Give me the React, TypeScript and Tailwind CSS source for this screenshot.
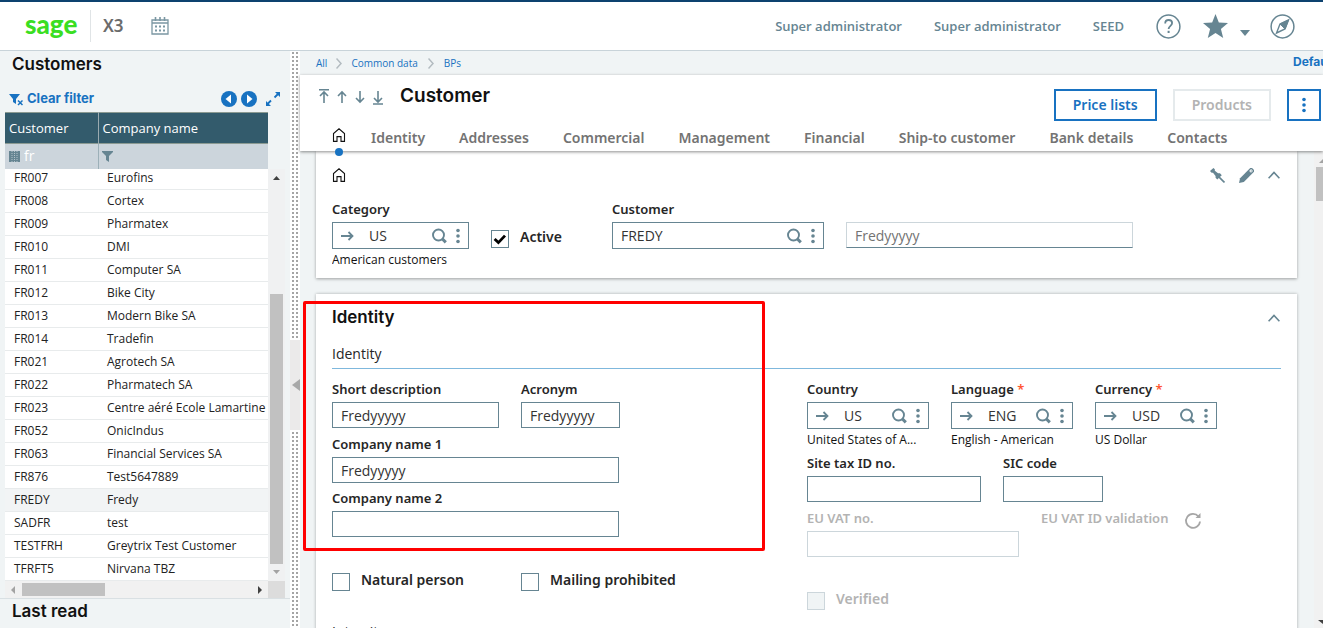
import React, { useId, useState } from 'react';

const customers = [
  ['FR007', 'Eurofins'],
  ['FR008', 'Cortex'],
  ['FR009', 'Pharmatex'],
  ['FR010', 'DMI'],
  ['FR011', 'Computer SA'],
  ['FR012', 'Bike City'],
  ['FR013', 'Modern Bike SA'],
  ['FR014', 'Tradefin'],
  ['FR021', 'Agrotech SA'],
  ['FR022', 'Pharmatech SA'],
  ['FR023', 'Centre aéré Ecole Lamartine'],
  ['FR052', 'OnicIndus'],
  ['FR063', 'Financial Services SA'],
  ['FR876', 'Test5647889'],
  ['FREDY', 'Fredy'],
  ['SADFR', 'test'],
  ['TESTFRH', 'Greytrix Test Customer'],
  ['TFRFT5', 'Nirvana TBZ'],
];

const tabs = ['Identity', 'Addresses', 'Commercial', 'Management', 'Financial', 'Ship-to customer', 'Bank details', 'Contacts'];

/* Icons */

function HomeIcon() {
  return (
    <svg width="14" height="14" viewBox="0 0 14 14" fill="none" stroke="#111" strokeWidth="1.1">
      <path d="M1.5 13.4V5.6L7 .8l5.5 4.8v7.8H9V8.6H5v4.8z" />
    </svg>
  );
}

function SearchIcon() {
  return (
    <svg width="16" height="16" viewBox="0 0 16 16" fill="none" stroke="#668592">
      <circle cx="6.500" cy="7" r="5.500" strokeWidth="1.900" />
      <path d="M10.200 10.800l3.600 3.600" strokeWidth="3" />
    </svg>
  );
}

function DotsIcon({ color = '#668592' }: { color?: string }) {
  return (
    <svg width="4" height="16" viewBox="0 0 4 16" fill={color}>
      <circle cx="2" cy="2.5" r="1.8" />
      <circle cx="2" cy="8" r="1.8" />
      <circle cx="2" cy="13.5" r="1.8" />
    </svg>
  );
}

function ArrowRightIcon() {
  return (
    <svg width="13" height="10" viewBox="0 0 13 10" fill="none" stroke="#668592" strokeWidth="1.8">
      <path d="M0 5h11.500M7.500 1l4 4-4 4" />
    </svg>
  );
}

function ChevronUpIcon() {
  return (
    <svg width="12" height="8" viewBox="0 0 12 8" fill="none" stroke="#668592" strokeWidth="1.6">
      <path d="M.6 7.2L6 1.5l5.4 5.7" />
    </svg>
  );
}

function RecordArrow({ kind }: { kind: 'first' | 'previous' | 'next' | 'last' }) {
  const paths = {
    first: 'M0 1.700h10M5 15V4M1 8l4-4 4 4',
    previous: 'M5 15V4M1 8l4-4 4 4',
    next: 'M5 3v11M1 10l4 4 4-4',
    last: 'M0 16h10M5 3v11M1 10l4 4 4-4',
  };
  return (
    <button aria-label={kind} className="cursor-pointer">
      <svg width="10" height="17" viewBox="0 0 10 17" fill="none" stroke="#668592" strokeWidth="1.6">
        <path d={paths[kind]} />
      </svg>
    </button>
  );
}

/* Form parts */

function Field({ label, value = '', className = '', disabled = false }: { label: string; value?: string; className?: string; disabled?: boolean }) {
  const id = useId();
  return (
    <div className={className}>
      <label htmlFor={id} className={`block font-['Noto_Sans'] text-[13px] leading-5 font-semibold ${disabled ? 'text-[#b3b3b3]' : 'text-[#262626]'}`}>
        {label}
      </label>
      <input
        id={id}
        defaultValue={value}
        disabled={disabled}
        className={`mt-[3px] block h-[26px] w-full border bg-white px-2 text-sm text-[#333] ${disabled ? 'border-[#ccd6db]' : 'border-[#668592]'}`}
      />
    </div>
  );
}

type LookupProps = { label: string; value: string; note?: string; required?: boolean; link?: boolean; className?: string };

function Lookup({ label, value, note, required, link = true, className = '' }: LookupProps) {
  const id = useId();
  return (
    <div className={className}>
      <label htmlFor={id} className="block font-['Noto_Sans'] text-[13px] leading-5 font-semibold text-[#262626]">
        {label}
        {required && <span className="text-[#ff5630]"> *</span>}
      </label>
      <div className="mt-[3px] flex h-[27px] items-center border border-[#668592] bg-white pr-2 pl-2">
        {link && (
          <button aria-label={`Open ${label}`} className="mr-[15px] shrink-0">
            <ArrowRightIcon />
          </button>
        )}
        <input id={id} defaultValue={value} className="min-w-0 flex-1 text-sm text-[#333]" />
        <button aria-label={`Search ${label}`} className="mr-2 shrink-0">
          <SearchIcon />
        </button>
        <button aria-label={`${label} actions`} className="shrink-0">
          <DotsIcon />
        </button>
      </div>
      {note && <p className="mt-[3px] truncate text-xs leading-4 text-[#111]">{note}</p>}
    </div>
  );
}

function Checkbox({ label, checked = false, disabled = false, className = '' }: { label: string; checked?: boolean; disabled?: boolean; className?: string }) {
  const [on, setOn] = useState(checked);
  return (
    <label className={`flex items-start gap-[11px] font-['Noto_Sans'] text-sm font-semibold ${disabled ? 'text-[#b3b3b3]' : 'text-[#262626]'} ${className}`}>
      <span className="relative mt-[3px] block size-[18px]">
        <input
          type="checkbox"
          checked={on}
          disabled={disabled}
          onChange={() => setOn(!on)}
          className={`block size-[18px] appearance-none border ${disabled ? 'border-[#ccd6db] bg-[#f0f4f5]' : 'border-[#668592] bg-white'}`}
        />
        {on && (
          <svg className="pointer-events-none absolute inset-0" width="18" height="18" viewBox="0 0 18 18" fill="none" stroke="#000" strokeWidth="2.8">
            <path d="M3.6 9l3.8 3.6L14 5.6" />
          </svg>
        )}
      </span>
      {label}
    </label>
  );
}

/* Page parts */

function TopBar() {
  return (
    <header className="flex h-[51px] shrink-0 items-center border-t-2 border-b border-t-[#0d426f] border-b-[#c8d3d9] bg-white pr-7 pl-[25px] text-[#668592]">
      <div className="flex h-8 w-[66px] items-center border-r border-[#e0e4e6] pb-1 font-['Lato'] text-[26px] font-black text-[#3ade22]">sage</div>
      <div className="ml-3 font-['Noto_Sans'] text-[17px] font-semibold text-[#6b6b6b]">X3</div>
      <button aria-label="Calendar" className="ml-[27px]">
        <svg width="18" height="18" viewBox="0 0 18 18" fill="none" stroke="#7b97a3">
          <path d="M1 3h16v14H1zM1 6h16" strokeWidth="1.3" />
          <path d="M4.500 0v4M9 0v4M13.500 0v4" strokeWidth="1.6" />
          <path d="M4 9.500h2M8 9.500h2M12 9.500h2M4 13.500h2M8 13.500h2M12 13.500h2" strokeWidth="2" />
        </svg>
      </button>
      <nav className="ml-auto flex items-center text-[13px] leading-6 font-semibold">
        <a href="#user">Super administrator</a>
        <a href="#role" className="ml-8">Super administrator</a>
        <a href="#endpoint" className="ml-8">SEED</a>
        <button aria-label="Help" className="ml-8">
          <svg width="25" height="25" viewBox="0 0 25 25" fill="none" stroke="#668592">
            <circle cx="12.500" cy="12.500" r="11.400" strokeWidth="1.5" />
            <path d="M9.200 9.500c0-4.800 6.900-4.400 6.900-.4 0 2.800-3.500 2.700-3.500 6" strokeWidth="1.8" />
            <path d="M12.600 16.800v2.200" strokeWidth="2" />
          </svg>
        </button>
        <button aria-label="Favorites" className="ml-[22px] flex items-end">
          <svg width="25" height="25" viewBox="0 0 24 24" fill="#668592">
            <path d="M12 0l3.200 8.200 8.800.5-6.800 5.600 2.200 8.700-7.400-4.800L4.600 23l2.200-8.700L0 8.700l8.800-.5z" />
          </svg>
          <svg width="10" height="9" viewBox="0 0 10 9" fill="#668592" className="ml-3">
            <path d="M0 0h10L5 6z" />
          </svg>
        </button>
        <button aria-label="Navigation" className="ml-5">
          <svg width="25" height="25" viewBox="0 0 25 25" fill="none" stroke="#668592">
            <circle cx="12.500" cy="12.500" r="11.400" strokeWidth="1.500" />
            <path d="M18.500 6l-3.500 9-8.500 4 3.500-9z" strokeWidth="1.400" />
            <path d="M18.500 6l-8.500 4 3 3z" fill="#668592" />
            <path d="M18.500 6L15 15l-2.500-2.500z" fill="#668592" />
          </svg>
        </button>
      </nav>
    </header>
  );
}

function Sidebar() {
  return (
    <aside className="flex w-[290px] shrink-0 flex-col bg-[#f0f4f5]">
      <h2 className="pt-px pl-3 font-['Inter'] text-[17px] leading-6 font-semibold text-[#111]">Customers</h2>
      <div className="mt-[13px] flex h-5 items-center pr-[9px] pl-[9px] text-[#1872c1]">
        <button className="flex items-center gap-1 font-['Inter'] text-[13px] font-bold">
          <svg width="14" height="14" viewBox="0 0 14 14" fill="none" stroke="#1872c1">
            <path d="M0 2h11L7 7v5l-3-2V7z" fill="#1872c1" stroke="none" />
            <path d="M9 8.500l4.500 4.500M13.500 8.500L9 13" strokeWidth="1.500" />
          </svg>
          Clear filter
        </button>
        <button aria-label="Previous page" className="ml-auto">
          <svg width="16" height="16" viewBox="0 0 16 16">
            <circle cx="8" cy="8" r="8" fill="#1872c1" />
            <path d="M10 3.500v9L4.500 8z" fill="#fff" />
          </svg>
        </button>
        <button aria-label="Next page" className="ml-1">
          <svg width="16" height="16" viewBox="0 0 16 16">
            <circle cx="8" cy="8" r="8" fill="#1872c1" />
            <path d="M6 3.500v9L11.500 8z" fill="#fff" />
          </svg>
        </button>
        <button aria-label="Expand" className="ml-2">
          <svg width="16" height="16" viewBox="0 0 16 16" fill="#1872c1" stroke="#1872c1" strokeWidth="1.800">
            <path d="M9.500 6.500L14 2M1.500 14L6 9.500" />
            <path d="M10 1h5v5zM1 10v5h5z" stroke="none" />
          </svg>
        </button>
      </div>
      <div className="mt-[3px] flex pl-[5px]">
        <div className="w-[263px]">
          <table className="w-full table-fixed border-collapse text-left text-[12px] text-[#222]">
            <thead>
              <tr className="h-[31px] border-t border-b border-[#8b9a92] bg-[#335b6c] text-[13px] text-white">
                <th className="w-[93px] border-r border-[#9aaab0] pt-px pl-1 font-normal">Customer</th>
                <th className="pt-px pl-1 font-normal">Company name</th>
              </tr>
              <tr className="h-[25px] bg-[#ccd5dc]">
                <td className="border-r border-[#9cb0b8] pl-1">
                  <label className="flex items-center gap-1">
                    <svg width="11" height="11" viewBox="0 0 11 11" fill="#668592">
                      <path d="M0 0h11v11H0z" />
                      <path d="M3 0v11M5.500 0v11M8 0v11" stroke="#b4c2ca" strokeDasharray="1 1" />
                    </svg>
                    <input aria-label="Filter customer" defaultValue="fr" className="w-12 text-sm leading-5 text-white" />
                  </label>
                </td>
                <td className="pl-[3px]">
                  <button aria-label="Filter company name" className="block">
                    <svg width="12" height="11" viewBox="0 0 12 11" fill="#668592">
                      <path d="M0 0h11v1L7 5v6L4 9V5L0 1z" />
                    </svg>
                  </button>
                </td>
              </tr>
            </thead>
            <tbody>
              {customers.map(([code, name], i) => (
                <tr key={code} className={`border-b border-[#e8ebec] ${i === 0 ? 'h-[21px] align-top leading-[18px]' : 'h-[23px] leading-5'} ${code === 'FREDY' ? 'bg-[#f2f4f5]' : 'bg-white'}`}>
                  <td className="pl-[9px]">{code}</td>
                  <td className="pl-[9px] whitespace-nowrap">{name}</td>
                </tr>
              ))}
            </tbody>
          </table>
          {/* horizontal scrollbar */}
          <div className="flex h-[17px] items-center justify-between bg-[#f1f1f1] px-[6px]">
            <svg width="4" height="8" fill="#a3a3a3"><path d="M4 0v8L0 4z" /></svg>
            <div className="mr-auto ml-[7px] h-[13px] w-[83px] bg-[#c1c1c1]" />
            <svg width="4" height="8" fill="#404040"><path d="M0 0v8l4-4z" /></svg>
          </div>
        </div>
        {/* vertical scrollbar */}
        <div className="flex w-[17px] flex-col">
          <div className="h-[57px]" />
          <div className="flex flex-1 flex-col items-center bg-[#f0f1f2] pt-[7px] pb-[7px]">
            <svg width="7" height="4" fill="#404040"><path d="M0 4h7L3.500 0z" /></svg>
            <div className="mt-auto h-[270px] w-[13px] bg-[#c1c1c1]" />
            <svg width="7" height="4" fill="#a3a3a3" className="mt-[6px]"><path d="M0 0h7L3.500 4z" /></svg>
          </div>
          <div className="h-[17px] bg-[#dcdcdc]" />
        </div>
      </div>
      <h2 className="border-t border-[#d9e0e3] pl-3 font-['Inter'] text-[17px] leading-6 font-semibold text-[#111]">Last read</h2>
    </aside>
  );
}

function Splitter() {
  return (
    <div className="relative w-[10px] shrink-0 bg-white">
      <svg width="10" height="100%">
        <pattern id="grip" width="10" height="4" patternUnits="userSpaceOnUse">
          <path d="M2 1h2v2H2zM6 1h2v2H6z" fill="#a5a5a5" />
        </pattern>
        <rect width="10" height="100%" fill="url(#grip)" />
      </svg>
      <button aria-label="Collapse list" className="absolute top-[289px] left-0 flex h-[90px] w-[10px] items-center justify-end bg-[#ebeaea]">
        <svg width="8" height="12" fill="#a8a8a8"><path d="M8 0v12L0 6z" /></svg>
      </button>
    </div>
  );
}

function Breadcrumb() {
  return (
    <div className="flex h-6 shrink-0 items-center bg-[#f0f4f5] pl-4 text-[10px] text-[#1872c1]">
      <a href="#all">All</a>
      <svg width="6" height="11" viewBox="0 0 6 11" fill="none" stroke="#b3bbc0" strokeWidth="1.500" className="mx-[9px]"><path d="M.5.500l4.500 5-4.500 5" /></svg>
      <a href="#common">Common data</a>
      <svg width="6" height="11" viewBox="0 0 6 11" fill="none" stroke="#b3bbc0" strokeWidth="1.500" className="mx-[10px]"><path d="M.5.500l4.500 5-4.500 5" /></svg>
      <a href="#bps">BPs</a>
      <a href="#view" className="ml-auto w-[30px] overflow-hidden pb-[3px] font-['Inter'] text-xs font-bold whitespace-nowrap">Default</a>
    </div>
  );
}

function PageHeader() {
  return (
    <div className="relative z-10 flex shrink-0 flex-col bg-white shadow-[0_1px_3px_rgba(0,0,0,0.45)]">
      <div className="flex h-[50px] items-start pt-3 pr-[2px] pl-[19px]">
        <div className="flex gap-2 pt-px">
          <RecordArrow kind="first" />
          <RecordArrow kind="previous" />
          <RecordArrow kind="next" />
          <RecordArrow kind="last" />
        </div>
        <h1 className="-mt-1 ml-[17px] font-['Inter'] text-[19px] leading-[26px] font-semibold text-[#111]">Customer</h1>
        <div className="ml-auto flex gap-4 pt-[2px] font-['Noto_Sans'] text-sm font-semibold">
          <button className="h-8 border-2 border-[#1872c1] px-[17px] text-[#1872c1]">Price lists</button>
          <button disabled className="h-8 border-2 border-[#e5eaec] px-[17px] text-[#b3b3b3]">Products</button>
          <button aria-label="More actions" className="flex h-8 w-[34px] items-center justify-center border-2 border-[#1872c1]">
            <DotsIcon color="#1872c1" />
          </button>
        </div>
      </div>
      <nav className="flex h-[26px] items-center gap-[34px] pl-8 font-['Noto_Sans'] text-sm font-semibold text-[#737373]">
        <a href="#home" aria-label="Home" className="relative mr-[-9px] pb-[6px]">
          <HomeIcon />
          <span className="absolute top-5 left-[3px] size-2 rounded-full bg-[#1872c1]" />
        </a>
        {tabs.map((tab) => (
          <a key={tab} href={`#${tab}`}>{tab}</a>
        ))}
      </nav>
    </div>
  );
}

function SummaryCard() {
  return (
    <section className="h-[127px] bg-white px-4 pt-4 shadow-[0_1px_3px_rgba(0,0,0,0.35)]">
      <div className="flex h-4 items-center pr-px">
        <HomeIcon />
        <div className="ml-auto flex items-center gap-[14px]">
          <button aria-label="Unpin">
            <svg width="15" height="15" viewBox="0 0 14 14" fill="#668592" stroke="#668592">
              <path d="M0 2.800L3.200 0 4.500 1.200v1.300L7.500 5h1.800l1.700 1.700L6.800 10.800 5.200 9.200V7.400L2.800 4.500H1.500z" stroke="none" />
              <path d="M8 8l5.500 5.500" strokeWidth="1.500" />
            </svg>
          </button>
          <button aria-label="Edit">
            <svg width="15" height="15" viewBox="0 0 14 14" fill="#668592">
              <path d="M0 14l1-4.500L10.500 0h1.700L14 1.800v1.700L4.500 13z" />
              <path d="M9.500 2.800l1.800-1.800 1.700 1.700-1.800 1.800z" fill="#fff" />
              <path d="M10.600 2.800l.8-.8.7.7-.8.800z" />
            </svg>
          </button>
          <button aria-label="Collapse"><ChevronUpIcon /></button>
        </div>
      </div>
      <div className="mt-4 flex items-start">
        <Lookup label="Category" value="US" note="American customers" className="w-[137px]" />
        <Checkbox label="Active" checked className="mt-[28px] ml-[22px] w-[121px]" />
        <Lookup label="Customer" value="FREDY" link={false} className="w-[212px]" />
        <input aria-label="Short name" defaultValue="Fredyyyyy" className="mt-[23px] ml-[22px] h-[26px] w-[287px] border border-[#ccd6db] border-b-[#668592] px-2 text-sm text-[#737373]" />
      </div>
    </section>
  );
}

function IdentityCard() {
  return (
    <section className="relative mt-4 h-[420px] bg-white px-4 pt-[11px] shadow-[0_0_3px_rgba(0,0,0,0.3)]">
      <div className="flex h-6 items-center pr-px">
        <h2 className="font-['Inter'] text-[17px] leading-6 font-semibold text-[#111]">Identity</h2>
        <button aria-label="Collapse identity" className="ml-auto pt-[2px]"><ChevronUpIcon /></button>
      </div>
      <h3 className="mt-[14px] border-b border-[#7fb8dd] pb-[3px] text-sm leading-[22px] text-[#262626]">Identity</h3>
      <div className="mt-[10px] flex">
        <div className="w-[475px]">
          <div className="flex gap-[22px]">
            <Field label="Short description" value="Fredyyyyy" className="w-[167px]" />
            <Field label="Acronym" value="Fredyyyyy" className="w-[99px]" />
          </div>
          <Field label="Company name 1" value="Fredyyyyy" className="mt-[6px] w-[287px]" />
          <Field label="Company name 2" className="mt-[5px] w-[287px]" />
          <div className="mt-[33px] flex">
            <Checkbox label="Natural person" className="w-[189px]" />
            <Checkbox label="Mailing prohibited" />
          </div>
          <h3 className="mt-[31px] text-sm text-[#262626]">Intersites</h3>
        </div>
        <div>
          <div className="flex gap-[22px]">
            <Lookup label="Country" value="US" note="United States of A..." className="w-[122px]" />
            <Lookup label="Language" value="ENG" note="English - American" required className="w-[122px]" />
            <Lookup label="Currency" value="USD" note="US Dollar" required className="w-[122px]" />
          </div>
          <div className="mt-[5px] flex gap-[22px]">
            <Field label="Site tax ID no." className="w-[174px]" />
            <Field label="SIC code" className="w-[100px]" />
          </div>
          <div className="mt-[6px] flex gap-[22px]">
            <Field label="EU VAT no." disabled className="w-[212px]" />
            <div className="flex items-start font-['Noto_Sans'] text-[13px] leading-5 font-semibold text-[#b3b3b3]">
              EU VAT ID validation
              <button aria-label="Validate EU VAT ID" className="mt-1 ml-4">
                <svg width="18" height="18" viewBox="0 0 18 18" fill="none" stroke="#a6a6a6" strokeWidth="1.800">
                  <path d="M14.500 4.500A7 7 0 1 0 16 9.500" />
                  <path d="M16.500 1v5h-5z" fill="#a6a6a6" stroke="none" />
                </svg>
              </button>
            </div>
          </div>
          <Checkbox label="Verified" disabled className="mt-8" />
        </div>
      </div>
      {/* highlighted area */}
      <div className="pointer-events-none absolute top-[7px] left-[-13px] h-[250px] w-[462px] rounded-xs border-3 border-[#ff0000]" />
    </section>
  );
}

export default function App() {
  return (
    <div className="flex h-screen flex-col overflow-hidden font-['Open_Sans',sans-serif]">
      <TopBar />
      <div className="flex min-h-0 flex-1">
        <Sidebar />
        <Splitter />
        <main className="flex min-w-0 flex-1 flex-col">
          <Breadcrumb />
          <PageHeader />
          <div className="flex min-h-0 flex-1 overflow-hidden bg-[#f0f4f5]">
            <div className="min-w-0 flex-1 pr-[17px] pl-4">
              <SummaryCard />
              <IdentityCard />
            </div>
            {/* page scrollbar */}
            <div className="flex w-[9px] flex-col items-end bg-[#f1f1f1] pt-2">
              <svg width="4" height="4" fill="#a3a3a3"><path d="M0 4h4V0z" /></svg>
              <div className="mt-1 h-[34px] w-[7px] bg-[#c1c1c1]" />
              <svg width="5" height="4" fill="#404040" className="mt-auto mb-1"><path d="M0 0h5v4z" /></svg>
            </div>
          </div>
        </main>
      </div>
    </div>
  );
}
